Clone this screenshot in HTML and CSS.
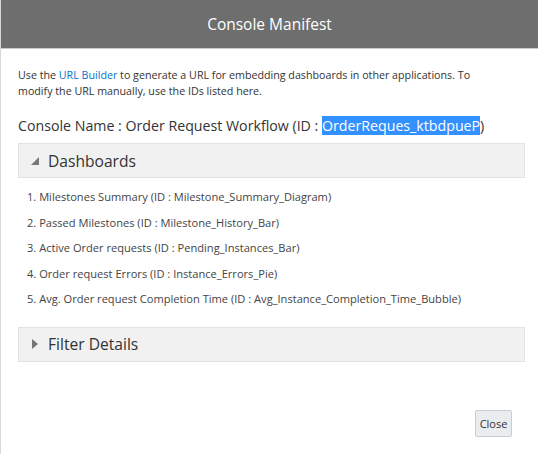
FILE: index.html
```html
<!DOCTYPE html>
<html>
<head>
<meta charset="utf-8">
<link rel="stylesheet" href="styles.css">
</head>
<body>
<div class="dialog">
  <div class="header">Console Manifest</div>
  <div class="content">
    <div class="intro">
      <div class="intro-line">Use the <span class="link">URL Builder</span> to generate a URL for embedding dashboards in other applications. To</div>
      <div class="intro-line">modify the URL manually, use the IDs listed here.</div>
    </div>
    <div class="console-name">Console Name : Order Request Workflow (ID : <span class="sel">OrderReques_ktbdpueP</span>)</div>
    <div class="panel">
      <div class="panel-head"><svg class="tri" width="8" height="8" viewBox="0 0 8 8"><polygon points="8,0 8,8 0,8" fill="#777"/></svg><span>Dashboards</span></div>
    </div>
    <ol class="items">
      <li>1. Milestones Summary (ID : Milestone_Summary_Diagram)</li>
      <li>2. Passed Milestones (ID : Milestone_History_Bar)</li>
      <li>3. Active Order requests (ID : Pending_Instances_Bar)</li>
      <li>4. Order request Errors (ID : Instance_Errors_Pie)</li>
      <li>5. Avg. Order request Completion Time (ID : Avg_Instance_Completion_Time_Bubble)</li>
    </ol>
    <div class="panel">
      <div class="panel-head closed"><svg class="tri" width="6" height="10" viewBox="0 0 6 10"><polygon points="0,0 6,5 0,10" fill="#777"/></svg><span>Filter Details</span></div>
    </div>
    <div class="footer"><button class="btn">Close</button></div>
  </div>
</div>
</body>
</html>
```
FILE: styles.css
```css
html, body { margin: 0; padding: 0; background: #fff; }
body { font-family: "Open Sans", "Noto Sans", sans-serif; color: #333; }
.dialog { width: 538px; height: 454px; border-left: 1px solid #d8d8d8; box-sizing: border-box; }
.header { height: 48px; background: #6e6e6e; border-bottom: 1px solid #c9c9c9; color: #fff; font-size: 15.5px; display: flex; align-items: center; justify-content: center; }
.content { padding: 0 13px 0 17px; }
.intro { margin: 18px 0 0; font-size: 10.7px; line-height: 16px; color: #333; }
.intro-line { white-space: nowrap; }
.link { color: #0572ce; }
.console-name { margin-top: 17px; font-size: 14.2px; line-height: 20px; color: #333; }
.sel { background: #3390ff; color: #fff; }
.panel { margin-top: 7px; background: #f1f1f1; border: 1px solid #e3e3e3; }
.panel-head { height: 33px; display: flex; align-items: center; padding-left: 12px; font-size: 15.6px; color: #333; }
.panel-head .tri { margin-right: 9px; }
.panel-head.closed { padding-left: 13px; }
.panel-head.closed .tri { margin-right: 10px; }
.items { list-style: none; margin: 10px 0 0; padding: 0 0 0 9px; font-size: 11.1px; color: #444; }
.items li { height: 25.5px; line-height: 18px; }
.items + .panel { margin-top: 11px; }
.footer { display: flex; justify-content: flex-end; padding-top: 48px; padding-right: 13px; }
.btn { width: 37px; height: 27px; background: #e9edef; border: 1px solid #c6ced3; border-radius: 2px; font-family: inherit; font-size: 11px; color: #333; padding: 0; }
```
